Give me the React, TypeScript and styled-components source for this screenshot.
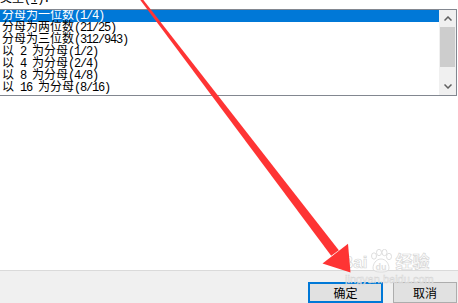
import React from 'react';
import styled, { createGlobalStyle } from 'styled-components';

const Global = createGlobalStyle`
  html, body { margin: 0; padding: 0; background: #fff; overflow: hidden; }
  body { font-family: "Noto Sans CJK SC", sans-serif; }
`;

const Page = styled.div`
  position: relative;
  width: 458px;
  height: 303px;
  overflow: hidden;
  display: flex;
  flex-direction: column;
  background: #fff;
  font-family: "Liberation Mono", "Noto Sans CJK SC", monospace;
  font-size: 12px;
  color: #000;
`;

const Label = styled.div`
  height: 12px;
  line-height: 12px;
  margin-top: -7px;
  white-space: nowrap;
`;

const Ascii = styled.span`
  font-family: "Liberation Mono", monospace;
  font-size: 12px;
  letter-spacing: -1.2px;
`;

const ListBox = styled.div`
  box-sizing: border-box;
  margin: 4px 0 0 -1px;
  width: 458px;
  height: 87px;
  border: 1px solid #828790;
  display: flex;
  background: #fff;
`;

const Rows = styled.div`
  flex: 1;
  display: flex;
  flex-direction: column;
  overflow: hidden;
`;

const Row = styled.div<{ $selected?: boolean }>`
  height: 12px;
  line-height: 12px;
  padding-left: 2px;
  white-space: nowrap;
  background: ${p => (p.$selected ? '#0078d7' : 'transparent')};
  color: ${p => (p.$selected ? '#fff' : '#000')};
`;

const ScrollBar = styled.div`
  width: 17px;
  background: #f0f0f0;
  display: flex;
  flex-direction: column;
`;

const ScrollBtn = styled.div`
  height: 17px;
  display: flex;
  align-items: center;
  justify-content: center;
`;

const Track = styled.div`
  flex: 1;
  display: flex;
  flex-direction: column;
  padding: 0 1px 0 1px;
`;

const Thumb = styled.div`
  height: 40px;
  background: #cdcdcd;
`;

const Spacer = styled.div`
  flex: 1;
  background: #fff;
`;

const Footer = styled.div`
  box-sizing: border-box;
  height: 33px;
  border-top: 1px solid #dadada;
  background: #f0f0f0;
  display: flex;
  justify-content: flex-end;
  align-items: flex-start;
  gap: 10px;
  padding: 11px 1px 0 0;
`;

const Button = styled.div<{ $default?: boolean; $w: number }>`
  box-sizing: border-box;
  width: ${p => p.$w}px;
  height: 21px;
  background: #e1e1e1;
  border: ${p => (p.$default ? '2px solid #0078d7' : '1px solid #adadad')};
  display: flex;
  align-items: center;
  justify-content: center;
  font-family: "Noto Sans CJK SC", sans-serif;
  font-size: 12px;
  color: #000;
`;

const Overlay = styled.svg`
  position: absolute;
  left: 0;
  top: 0;
  pointer-events: none;
`;

const Watermark = styled.div`
  position: absolute;
  left: 341px;
  top: 249px;
  display: flex;
  flex-direction: column;
  align-items: flex-start;
  pointer-events: none;
`;

const WmTop = styled.div`
  display: flex;
  align-items: flex-end;
  font-family: "Liberation Sans", "Noto Sans CJK SC", sans-serif;
  font-weight: bold;
  font-size: 17px;
  line-height: 20px;
  color: rgba(255, 255, 255, 0.55);
  -webkit-text-stroke: 0.7px #d6d6d6;
`;

const WmBottom = styled.div`
  margin: 1px 0 0 4px;
  font-family: "Liberation Sans", sans-serif;
  font-size: 11px;
  line-height: 11px;
  color: rgba(255, 255, 255, 0.6);
  -webkit-text-stroke: 0.5px #d4d4d4;
`;

function Mixed({ text }: { text: string }) {
  const parts = text.match(/[\x00-\x7f]+|[^\x00-\x7f]+/g) || [];
  return (
    <>
      {parts.map((p, i) =>
        /^[\x00-\x7f]+$/.test(p) ? <Ascii key={i}>{p.replace(/ /g, '\u00a0')}</Ascii> : <span key={i}>{p}</span>
      )}
    </>
  );
}

const items = [
  '分母为一位数(1/4)',
  '分母为两位数(21/25)',
  '分母为三位数(312/943)',
  '以 2 为分母(1/2)',
  '以 4 为分母(2/4)',
  '以 8 为分母(4/8)',
  '以 16 为分母(8/16)',
];

const Chevron = ({ up }: { up?: boolean }) => (
  <svg width="8" height="5" viewBox="0 0 8 5">
    <polyline
      points={up ? '0.5,4.5 4,1 7.5,4.5' : '0.5,0.5 4,4 7.5,0.5'}
      fill="none"
      stroke="#606060"
      strokeWidth="1.5"
    />
  </svg>
);

export default function App() {
  return (
    <Page>
      <Global />
      <Label>
        类型(<Ascii><u>T</u>):</Ascii>
      </Label>
      <ListBox>
        <Rows>
          {items.map((t, i) => (
            <Row key={i} $selected={i === 0}>
              <Mixed text={t} />
            </Row>
          ))}
        </Rows>
        <ScrollBar>
          <ScrollBtn>
            <Chevron up />
          </ScrollBtn>
          <Track>
            <Thumb />
          </Track>
          <ScrollBtn>
            <Chevron />
          </ScrollBtn>
        </ScrollBar>
      </ListBox>
      <Spacer />
      <Footer>
        <Button $default $w={75}>确定</Button>
        <Button $w={64}>取消</Button>
      </Footer>
      <Watermark>
        <WmTop>
          <span>Bai</span>
          <svg width="26" height="24" viewBox="0 0 26 24" style={{ margin: '0 1px' }}>
            <g fill="rgba(255,255,255,0.55)" stroke="#d6d6d6" strokeWidth="0.8">
              <ellipse cx="6" cy="7" rx="2.5" ry="3.2" />
              <ellipse cx="11" cy="3.5" rx="2.5" ry="3.2" />
              <ellipse cx="16.5" cy="3.5" rx="2.5" ry="3.2" />
              <ellipse cx="21" cy="7.5" rx="2.5" ry="3.2" />
              <path d="M13 10 C8 10 5 15 5 19 C5 22 8 23 13 23 C18 23 21 22 21 19 C21 15 18 10 13 10 Z" />
            </g>
            <text x="13" y="21" textAnchor="middle" fontSize="9" fontFamily="Liberation Sans, sans-serif" fontWeight="bold" fill="#e0e0e0">du</text>
          </svg>
          <span>经验</span>
        </WmTop>
        <WmBottom>jingyan.baidu.com</WmBottom>
      </Watermark>
      <Overlay width="458" height="303" viewBox="0 0 458 303">
        <polygon points="137,-4.4 139,-5.6 338.8,250.2 331.2,255.8" fill="#fe3434" />
        <polygon points="322.5,263.5 348,243.8 350.5,272.5" fill="#fe3434" />
      </Overlay>
    </Page>
  );
}
